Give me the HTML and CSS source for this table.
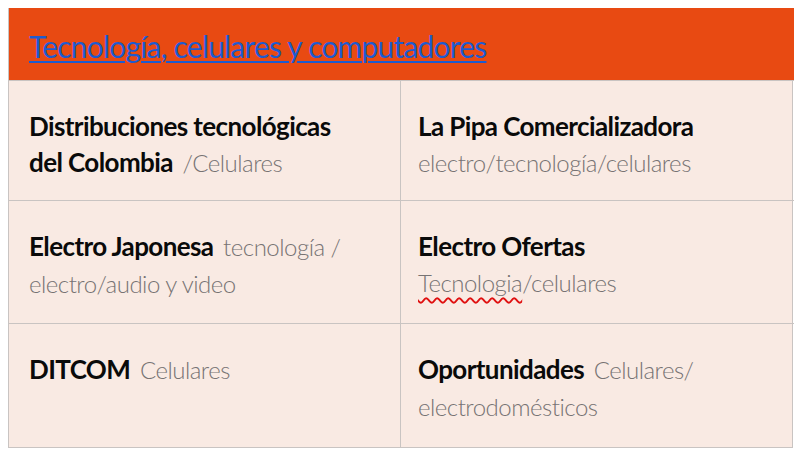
FILE: index.html
```html
<!DOCTYPE html>
<html lang="es">
<head>
<meta charset="utf-8">
<link rel="stylesheet" href="styles.css">
</head>
<body>
<div class="table">
  <div class="head"><a class="title" href="#">Tecnología, celulares y computadores</a></div>
  <div class="cell"><b>Distribuciones tecnológicas<br>del Colombia</b> <span class="cat">/Celulares</span></div>
  <div class="cell right"><b>La Pipa Comercializadora</b> <span class="cat">electro/tecnología/celulares</span></div>
  <div class="cell"><b>Electro Japonesa</b> <span class="cat">tecnología / electro/audio y video</span></div>
  <div class="cell right"><b>Electro Ofertas</b><br><span class="cat"><span class="spell">Tecnologia</span>/celulares</span></div>
  <div class="cell"><b>DITCOM</b> <span class="cat">Celulares</span></div>
  <div class="cell right"><b>Oportunidades</b> <span class="cat">Celulares/ electrodomésticos</span></div>
</div>
</body>
</html>
```

FILE: styles.css
```css
html, body { margin: 0; padding: 0; background: #ffffff; }
body { padding: 8px; font-family: Lato, "Noto Sans", sans-serif; }
.table {
  width: 785px;
  display: grid;
  grid-template-columns: 391px 394px;
  grid-template-rows: 72px 120px 123px 124px;
  border: 1px solid #c9c4c2;
  border-top: none;
  box-sizing: border-box;
  background: #f9eae3;
}
.head {
  grid-column: 1 / 3;
  background: #e84a12;
  padding: 20px 20px 0 20px;
  box-sizing: border-box;
}
.title {
  color: #1d5bd0;
  font-size: 30px;
  line-height: 36px;
  letter-spacing: -0.8px;
  text-decoration: underline;
  text-decoration-thickness: 2px;
  text-underline-offset: 3px;
}
.cell {
  border-top: 1px solid #c9c4c2;
  padding: 27px 20px 0 20px;
  font-size: 26px;
  line-height: 36px;
  color: #777373;
}
.cell.right { border-left: 1px solid #c9c4c2; padding-left: 17px; }
.cell b { color: #0a0a0a; font-weight: 700; letter-spacing: -0.6px; margin-right: 3px; }
.cat { font-weight: 300; font-size: 24px; letter-spacing: -0.5px; }
.spell { text-decoration: underline wavy #e01010; text-decoration-thickness: 1.5px; text-underline-offset: 5px; }
```
